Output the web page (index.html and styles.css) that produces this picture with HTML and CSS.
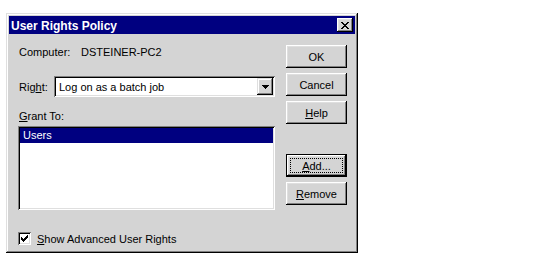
FILE: index.html
```html
<!DOCTYPE html>
<html lang="en">
<head>
    <meta charset="UTF-8">
    <title>User Rights Policy</title>
    <link rel="stylesheet" href="styles.css">
</head>
<body>
    <!-- Dialog window -->
    <div class="dialog">
        <div class="titlebar">
            <span class="title">User Rights Policy</span>
            <span class="close-btn">
                <svg width="8" height="7" viewBox="0 0 8 7">
                    <path d="M0 0h2v1h1v1h2v-1h1v-1h2v1h-1v1h-1v1h-1v1h1v1h1v1h1v1h-2v-1h-1v-1h-2v1h-1v1h-2v-1h1v-1h1v-1h1v-1h-1v-1h-1v-1h-1z" fill="#000"/>
                </svg>
            </span>
        </div>

        <div class="dialog-body">
            <div class="main-col">
                <div class="row computer-row">
                    <span class="computer-label">Computer:</span>
                    <span>DSTEINER-PC2</span>
                </div>

                <div class="row right-row">
                    <span class="right-label">Rig<u>h</u>t:</span>
                    <div class="combo">
                        <span class="combo-text">Log on as a batch job</span>
                        <span class="combo-btn">
                            <svg width="7" height="4" viewBox="0 0 7 4">
                                <path d="M0 0h7v1h-1v1h-1v1h-1v1h-1v-1h-1v-1h-1v-1h-1z" fill="#000"/>
                            </svg>
                        </span>
                    </div>
                </div>

                <div class="grant-label"><u>G</u>rant To:</div>

                <div class="listbox">
                    <div class="list-item selected">Users</div>
                </div>

                <div class="check-row">
                    <span class="checkbox">
                        <svg width="7" height="7" viewBox="0 0 7 7">
                            <path d="M6 0h1v3h-1v1h-1v1h-1v1h-1v1h-1v-1h-1v-1h-1v-3h1v1h1v1h1v-1h1v-1h1v-1h1z" fill="#000"/>
                        </svg>
                    </span>
                    <span><u>S</u>how Advanced User Rights</span>
                </div>
            </div>

            <div class="btn-col">
                <div class="btn">OK</div>
                <div class="btn">Cancel</div>
                <div class="btn"><u>H</u>elp</div>
                <div class="btn default add-btn"><span class="focus"><u>A</u>dd...</span></div>
                <div class="btn"><u>R</u>emove</div>
            </div>
        </div>
    </div>
</body>
</html>
```

FILE: styles.css
```css
/* General */
* {
    margin: 0;
    padding: 0;
    box-sizing: border-box;
}

body {
    background-color: #ffffff;
    font-family: 'Liberation Sans', Arial, sans-serif;
    font-size: 11px;
    color: #000;
    padding: 13px 0 0 6px;
}

/* Dialog window */
.dialog {
    width: 352px;
    height: 240px;
    background-color: #d4d4d4;
    padding: 3px;
    box-shadow: inset -1px -1px 0 #000, inset 1px 1px 0 #dfdfdf,
                inset -2px -2px 0 #808080, inset 2px 2px 0 #fff;
    display: flex;
    flex-direction: column;
}

.titlebar {
    height: 18px;
    background-color: #000080;
    color: #fff;
    display: flex;
    align-items: center;
    justify-content: space-between;
    padding: 0 2px 0 2px;
}

.title {
    font-weight: bold;
    font-size: 12px;
    padding-top: 1px;
}

.close-btn {
    width: 16px;
    height: 14px;
    background-color: #d4d4d4;
    box-shadow: inset -1px -1px 0 #000, inset 1px 1px 0 #fff,
                inset -2px -2px 0 #808080, inset 2px 2px 0 #dfdfdf;
    display: flex;
    align-items: center;
    justify-content: center;
    padding-right: 1px;
}

.close-btn svg {
    display: block;
}

/* Body */
.dialog-body {
    flex: 1;
    display: flex;
    padding: 0 8px 0 9px;
    gap: 11px;
}

.main-col {
    flex: 1;
    display: flex;
    flex-direction: column;
}

.row {
    display: flex;
    align-items: center;
}

.computer-row {
    margin-top: 11px;
    height: 14px;
    padding-left: 1px;
}

.computer-label {
    width: 62px;
}

.right-row {
    margin-top: 17px;
    padding-left: 1px;
}

.right-label {
    width: 35px;
}

/* Combo box */
.combo {
    flex: 1;
    height: 21px;
    background-color: #fff;
    box-shadow: inset 1px 1px 0 #808080, inset -1px -1px 0 #fff,
                inset 2px 2px 0 #000, inset -2px -2px 0 #dfdfdf;
    display: flex;
    align-items: center;
    padding: 2px;
}

.combo-text {
    flex: 1;
    padding-left: 3px;
}

.combo-btn {
    width: 16px;
    height: 17px;
    background-color: #d4d4d4;
    box-shadow: inset -1px -1px 0 #000, inset 1px 1px 0 #dfdfdf,
                inset -2px -2px 0 #808080, inset 2px 2px 0 #fff;
    display: flex;
    align-items: center;
    justify-content: center;
}

.combo-btn svg {
    display: block;
}

.grant-label {
    margin-top: 12px;
    height: 14px;
    line-height: 14px;
    padding-left: 1px;
}

/* List box */
.listbox {
    margin-top: 3px;
    height: 84px;
    background-color: #fff;
    box-shadow: inset 1px 1px 0 #808080, inset -1px -1px 0 #fff,
                inset 2px 2px 0 #000, inset -2px -2px 0 #dfdfdf;
    padding: 2px;
}

.list-item {
    height: 15px;
    line-height: 15px;
    padding-left: 3px;
}

.list-item.selected {
    background-color: #000080;
    color: #fff;
}

/* Checkbox */
.check-row {
    margin-top: 22px;
    display: flex;
    align-items: center;
    gap: 6px;
}

.checkbox {
    width: 13px;
    height: 13px;
    background-color: #fff;
    box-shadow: inset 1px 1px 0 #808080, inset -1px -1px 0 #fff,
                inset 2px 2px 0 #000, inset -2px -2px 0 #dfdfdf;
    display: flex;
    align-items: center;
    justify-content: center;
}

.checkbox svg {
    display: block;
}

/* Buttons */
.btn-col {
    width: 61px;
    display: flex;
    flex-direction: column;
    gap: 5px;
    padding-top: 11px;
}

.btn {
    height: 23px;
    background-color: #d4d4d4;
    box-shadow: inset -1px -1px 0 #000, inset 1px 1px 0 #fff,
                inset -2px -2px 0 #808080, inset 2px 2px 0 #dfdfdf;
    display: flex;
    align-items: center;
    justify-content: center;
}

.add-btn {
    margin-top: 25px;
}

.btn.default {
    border: 1px solid #000;
    padding: 3px;
}

.focus {
    flex: 1;
    align-self: stretch;
    border: 1px dotted #000;
    display: flex;
    align-items: center;
    justify-content: center;
}
```
